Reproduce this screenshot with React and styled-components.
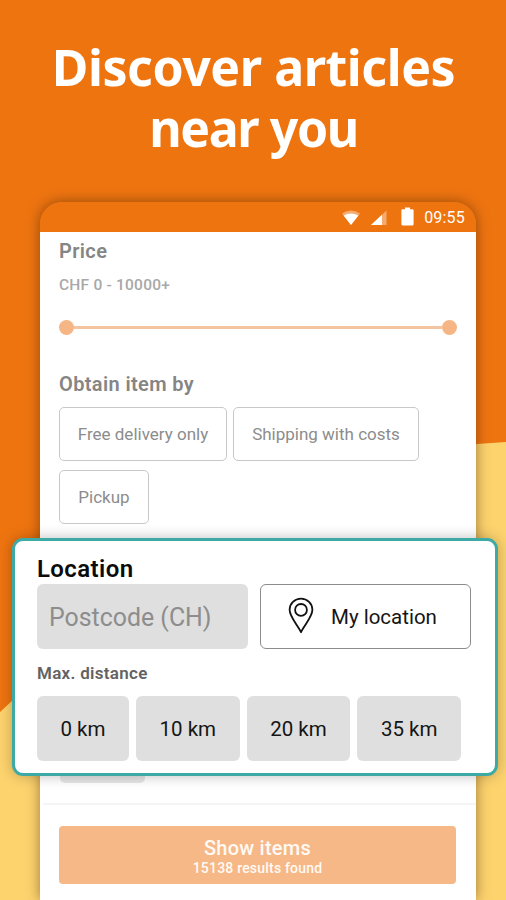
import styled, { createGlobalStyle } from 'styled-components'

const distances = ['0 km', '10 km', '20 km', '35 km']

function App() {
  return (
    <Page>
      <GlobalStyle />
      <Backdrop viewBox="0 0 506 900">
        <path d="M0 712 L13 700 C150 560 300 458 477 444 L506 442 V900 H0 Z" fill="#fdd36e" />
      </Backdrop>
      <Title>
        <TitleLine>Discover articles</TitleLine>
        <TitleLine $spacing="-1.4px">near you</TitleLine>
      </Title>
      <Phone>
        <StatusBar>
          <WifiIcon />
          <SignalIcon />
          <BatteryIcon />
          <Clock>09:55</Clock>
        </StatusBar>
        <Filters>
          <Heading>Price</Heading>
          <PriceRange>CHF 0 - 10000+</PriceRange>
          <Slider>
            <Knob />
            <Track />
            <Knob />
          </Slider>
          <Heading>Obtain item by</Heading>
          <Chips>
            <Chip $width="168px">Free delivery only</Chip>
            <Chip $width="186px">Shipping with costs</Chip>
            <Chip $width="90px">Pickup</Chip>
          </Chips>
          <HiddenChip />
        </Filters>
        <Footer>
          <ShowButton>
            <ShowLabel>Show items</ShowLabel>
            <ShowCount>15138 results found</ShowCount>
          </ShowButton>
        </Footer>
      </Phone>
      <LocationCard>
        <CardTitle>Location</CardTitle>
        <Fields>
          <Postcode>Postcode (CH)</Postcode>
          <MyLocation>
            <PinIcon />
            <span>My location</span>
          </MyLocation>
        </Fields>
        <DistanceTitle>Max. distance</DistanceTitle>
        <Distances>
          {distances.map((distance) => (
            <Distance key={distance}>{distance}</Distance>
          ))}
        </Distances>
      </LocationCard>
    </Page>
  )
}

export default App

function WifiIcon() {
  return (
    <svg width="20" height="16" viewBox="0 0 20 16">
      <path d="M1 3.6 Q10 -2.6 19 3.6 L10 15 Z" fill="#fff" fillOpacity="0.4" />
      <path d="M2.6 5.6 Q10 1.2 17.4 5.6 L10 15 Z" fill="#fff" />
    </svg>
  )
}

function SignalIcon() {
  return (
    <svg width="16" height="16" viewBox="0 0 16 16">
      <path d="M0 15 L15.5 0.5 V15 Z" fill="#fff" fillOpacity="0.4" />
      <path d="M0 15 L11 4.7 V15 Z" fill="#fff" />
    </svg>
  )
}

function BatteryIcon() {
  return (
    <svg width="13" height="19" viewBox="0 0 13 19">
      <path d="M4 0.5 H9 V2.3 H11.5 Q12.6 2.3 12.6 3.4 V17.3 Q12.6 18.4 11.5 18.4 H1.5 Q0.4 18.4 0.4 17.3 V3.4 Q0.4 2.3 1.5 2.3 H4 Z" fill="#fff" />
    </svg>
  )
}

function PinIcon() {
  return (
    <svg width="26" height="37" viewBox="0 0 26 37" fill="none" stroke="#111" strokeWidth="1.8">
      <path d="M13 35.2 C10 28.5 1.6 20 1.6 12.8 A11.4 11.2 0 0 1 24.4 12.8 C24.4 20 16 28.5 13 35.2 Z" strokeLinejoin="round" />
      <circle cx="13" cy="12.9" r="5.9" />
    </svg>
  )
}

const GlobalStyle = createGlobalStyle`
  body {
    margin: 0;
    font-family: Roboto, sans-serif;
  }

  * {
    box-sizing: border-box;
  }
`

const Page = styled.div`
  position: relative;
  width: 506px;
  height: 900px;
  overflow: hidden;
  background: #ee7410;
`

const Backdrop = styled.svg`
  position: absolute;
  inset: 0;
  width: 100%;
  height: 100%;
`

const Title = styled.h1`
  position: relative;
  height: 202px;
  margin: 0;
  padding: 37px 0 0 1px;
  display: flex;
  flex-direction: column;
  align-items: center;
  color: #fff;
  font: 700 50px/61px 'Noto Sans', sans-serif;
`

const TitleLine = styled.span`
  white-space: nowrap;
  letter-spacing: ${(props) => props.$spacing || '-0.45px'};
`

const Phone = styled.div`
  position: relative;
  width: 436px;
  height: 698px;
  margin-left: 40px;
  display: flex;
  flex-direction: column;
  background: linear-gradient(#ee7410 30px, #fff 30px);
  border-radius: 22px 22px 0 0;
  box-shadow: 0 0 13px rgba(60, 30, 0, 0.5);
`

const StatusBar = styled.div`
  height: 30px;
  flex-shrink: 0;
  padding: 1px 11px 0 0;
  display: flex;
  align-items: center;
  justify-content: flex-end;

  svg:nth-child(1) {
    margin-right: 10px;
  }

  svg:nth-child(2) {
    margin-right: 14px;
  }

  svg:nth-child(3) {
    margin: -3px 10px 0 0;
  }
`

const Clock = styled.span`
  color: #fff;
  font-size: 16px;
  letter-spacing: 0.2px;
`

const Filters = styled.div`
  height: 573px;
  margin-left: 3px;
  padding: 6px 16px 0;
  border-bottom: 2px solid #f5f5f5;
`

const Heading = styled.h2`
  margin: 0;
  color: #858585;
  font-size: 20px;
  font-weight: 600;
  letter-spacing: 0.37px;
  line-height: 26px;
`

const PriceRange = styled.div`
  margin-top: 11px;
  color: #a8a8a8;
  font-size: 15.5px;
  font-weight: 500;
  letter-spacing: 0.22px;
  line-height: 20px;
`

const Slider = styled.div`
  height: 16px;
  width: 398px;
  margin: 24px 0 36px;
  display: flex;
  align-items: center;
`

const Knob = styled.span`
  width: 15px;
  height: 15px;
  border-radius: 50%;
  background: #f6b584;
`

const Track = styled.span`
  flex: 1;
  height: 3px;
  background: #f4c49e;
`

const Chips = styled.div`
  margin-top: 10px;
  display: flex;
  flex-wrap: wrap;
  gap: 9px 6px;
`

const Chip = styled.div`
  width: ${(props) => props.$width};
  height: 54px;
  display: flex;
  align-items: center;
  justify-content: center;
  border: 1px solid #c8c8c8;
  border-radius: 5px;
  color: #8c8c8c;
  font-size: 17px;
  white-space: nowrap;
`

const HiddenChip = styled.div`
  width: 85px;
  height: 54px;
  margin: 205px 0 0 1px;
  border-radius: 5px;
  background: #e6e6e6;
`

const Footer = styled.div`
  padding: 21px 20px 0 19px;
`

const ShowButton = styled.div`
  height: 58px;
  padding-top: 9px;
  display: flex;
  flex-direction: column;
  align-items: center;
  border-radius: 4px;
  background: #f6b886;
  color: #fffaf5;
`

const ShowLabel = styled.span`
  font-size: 20px;
  font-weight: 500;
  letter-spacing: 0.25px;
  line-height: 26px;
`

const ShowCount = styled.span`
  font-size: 14px;
  font-weight: 500;
  letter-spacing: 0.2px;
  line-height: 15px;
`

const LocationCard = styled.section`
  position: absolute;
  left: 12px;
  top: 538px;
  width: 486px;
  height: 238px;
  padding: 14px 22px 0;
  background: #fff;
  border: 3px solid #3eaaa6;
  border-radius: 11px;
  box-shadow: 0 0 14px rgba(0, 0, 0, 0.25);
`

const CardTitle = styled.h2`
  margin: 0 0 1px;
  color: #0b0b0b;
  font-size: 24px;
  font-weight: 600;
  letter-spacing: 0.4px;
  line-height: 28px;
`

const Fields = styled.div`
  display: flex;
  gap: 12px;
`

const Postcode = styled.div`
  width: 211px;
  height: 65px;
  padding: 2px 0 0 12px;
  display: flex;
  align-items: center;
  border-radius: 6px;
  background: #dfdfdf;
  color: #8d8d8d;
  font-size: 24.9px;
`

const MyLocation = styled.div`
  width: 211px;
  height: 65px;
  padding: 1px 0 0 27px;
  display: flex;
  align-items: center;
  gap: 17px;
  border: 1px solid #8c8c8c;
  border-radius: 6px;
  color: #151515;
  font-size: 20.5px;

  svg {
    margin-top: -4px;
  }
`

const DistanceTitle = styled.h3`
  margin: 14px 0 13px;
  color: #626262;
  font-size: 17px;
  font-weight: 600;
  letter-spacing: 0.3px;
  line-height: 20px;
`

const Distances = styled.div`
  width: 424px;
  display: grid;
  grid-template-columns: 92px repeat(3, 1fr);
  gap: 7px;
`

const Distance = styled.div`
  height: 65px;
  padding-top: 1px;
  display: flex;
  align-items: center;
  justify-content: center;
  border-radius: 6px;
  background: #dfdfdf;
  color: #151515;
  font-size: 20.5px;
`
